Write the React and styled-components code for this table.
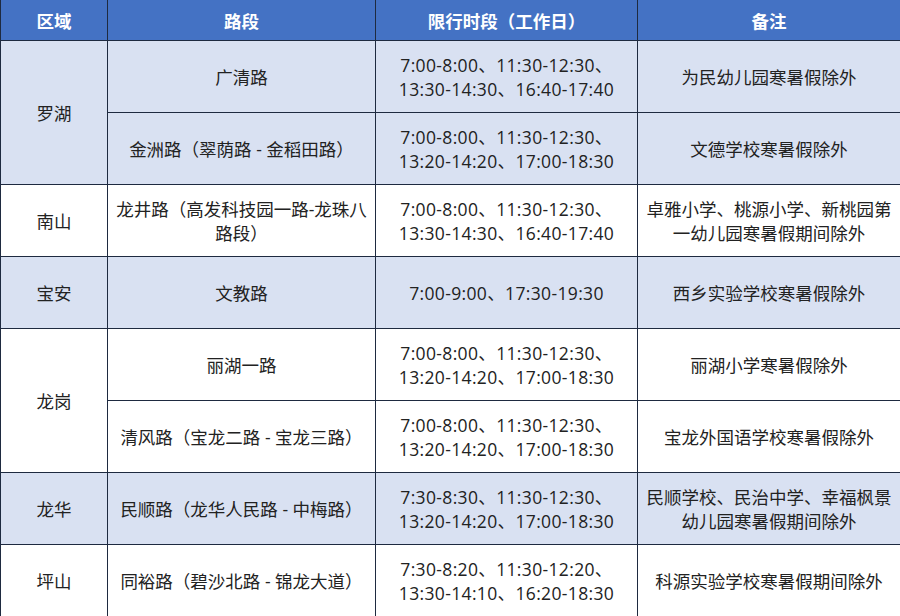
import React from "react";
import styled, { createGlobalStyle } from "styled-components";

const GlobalStyle = createGlobalStyle`
  html, body {
    margin: 0;
    padding: 0;
    background: #ffffff;
  }
  body {
    font-family: "Open Sans", "Noto Sans CJK SC", sans-serif;
  }
`;

const rows = [
  {
    area: "罗湖",
    shade: true,
    items: [
      {
        road: "广清路",
        time: ["7:00-8:00、11:30-12:30、", "13:30-14:30、16:40-17:40"],
        note: "为民幼儿园寒暑假除外",
      },
      {
        road: "金洲路（翠荫路 - 金稻田路）",
        time: ["7:00-8:00、11:30-12:30、", "13:20-14:20、17:00-18:30"],
        note: "文德学校寒暑假除外",
      },
    ],
  },
  {
    area: "南山",
    shade: false,
    items: [
      {
        road: "龙井路（高发科技园一路-龙珠八路段）",
        time: ["7:00-8:00、11:30-12:30、", "13:30-14:30、16:40-17:40"],
        note: "卓雅小学、桃源小学、新桃园第一幼儿园寒暑假期间除外",
      },
    ],
  },
  {
    area: "宝安",
    shade: true,
    items: [
      {
        road: "文教路",
        time: ["7:00-9:00、17:30-19:30"],
        note: "西乡实验学校寒暑假除外",
      },
    ],
  },
  {
    area: "龙岗",
    shade: false,
    items: [
      {
        road: "丽湖一路",
        time: ["7:00-8:00、11:30-12:30、", "13:20-14:20、17:00-18:30"],
        note: "丽湖小学寒暑假除外",
      },
      {
        road: "清风路（宝龙二路 - 宝龙三路）",
        time: ["7:00-8:00、11:30-12:30、", "13:20-14:20、17:00-18:30"],
        note: "宝龙外国语学校寒暑假除外",
      },
    ],
  },
  {
    area: "龙华",
    shade: true,
    items: [
      {
        road: "民顺路（龙华人民路 - 中梅路）",
        time: ["7:30-8:30、11:30-12:30、", "13:20-14:20、17:00-18:30"],
        note: "民顺学校、民治中学、幸福枫景幼儿园寒暑假期间除外",
      },
    ],
  },
  {
    area: "坪山",
    shade: false,
    items: [
      {
        road: "同裕路（碧沙北路 - 锦龙大道）",
        time: ["7:30-8:20、11:30-12:20、", "13:30-14:10、16:20-18:30"],
        note: "科源实验学校寒暑假期间除外",
      },
    ],
  },
];

export default function App() {
  return (
    <>
      <GlobalStyle />
      <Table>
        <colgroup>
          <col style={{ width: "107px" }} />
          <col style={{ width: "268px" }} />
          <col style={{ width: "262px" }} />
          <col style={{ width: "263px" }} />
        </colgroup>
        <thead>
          <tr>
            <HeadCell>区域</HeadCell>
            <HeadCell>路段</HeadCell>
            <HeadCell>限行时段（工作日）</HeadCell>
            <HeadCell>备注</HeadCell>
          </tr>
        </thead>
        <tbody>
          {rows.map((group) =>
            group.items.map((item, i) => (
              <Row key={group.area + i} $shade={group.shade}>
                {i === 0 && <Cell rowSpan={group.items.length}>{group.area}</Cell>}
                <Cell>{item.road}</Cell>
                <Cell>
                  {item.time.map((t) => (
                    <TimeLine key={t}>{t}</TimeLine>
                  ))}
                </Cell>
                <Cell>{item.note}</Cell>
              </Row>
            ))
          )}
        </tbody>
      </Table>
    </>
  );
}

const Table = styled.table`
  width: 900px;
  table-layout: fixed;
  border-collapse: collapse;
  font-size: 17.5px;
  color: #222222;
`;

const HeadCell = styled.th`
  height: 40px;
  padding: 0 6px;
  background: #4472c4;
  color: #ffffff;
  font-weight: 700;
  text-align: center;
  border: 1px solid #1e2a40;
  border-top: none;
`;

const Row = styled.tr`
  background: ${(p) => (p.$shade ? "#d9e1f2" : "#ffffff")};
`;

const Cell = styled.td`
  height: 72px;
  box-sizing: border-box;
  padding: 0 6px;
  text-align: center;
  vertical-align: middle;
  line-height: 24px;
  border: 1px solid #1e2a40;
`;

const TimeLine = styled.div`
  white-space: nowrap;
  letter-spacing: 0.35px;
`;
